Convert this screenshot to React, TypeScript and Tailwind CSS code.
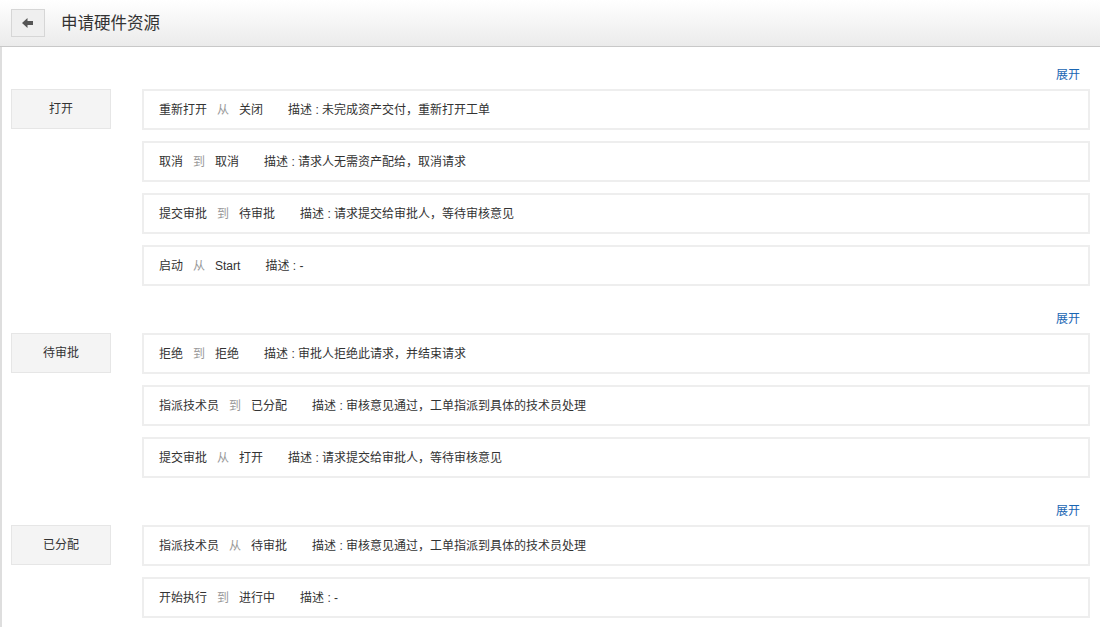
type Row = { action: string; dir: "从" | "到"; state: string; desc: string };
type Group = { label: string; rows: Row[] };

const groups: Group[] = [
  {
    label: "打开",
    rows: [
      { action: "重新打开", dir: "从", state: "关闭", desc: "未完成资产交付，重新打开工单" },
      { action: "取消", dir: "到", state: "取消", desc: "请求人无需资产配给，取消请求" },
      { action: "提交审批", dir: "到", state: "待审批", desc: "请求提交给审批人，等待审核意见" },
      { action: "启动", dir: "从", state: "Start", desc: "-" },
    ],
  },
  {
    label: "待审批",
    rows: [
      { action: "拒绝", dir: "到", state: "拒绝", desc: "审批人拒绝此请求，并结束请求" },
      { action: "指派技术员", dir: "到", state: "已分配", desc: "审核意见通过，工单指派到具体的技术员处理" },
      { action: "提交审批", dir: "从", state: "打开", desc: "请求提交给审批人，等待审核意见" },
    ],
  },
  {
    label: "已分配",
    rows: [
      { action: "指派技术员", dir: "从", state: "待审批", desc: "审核意见通过，工单指派到具体的技术员处理" },
      { action: "开始执行", dir: "到", state: "进行中", desc: "-" },
    ],
  },
];

const BackArrow = () => (
  <svg width="12" height="10" viewBox="0 0 12 10" fill="#555">
    <path d="M0 5 L5.5 0 L5.5 3 L11 3 L11 7 L5.5 7 L5.5 10 Z" />
  </svg>
);

export default function App() {
  return (
    <div
      className="min-h-screen bg-white text-[12px] text-[#333]"
      style={{ fontFamily: '"Liberation Sans", Arial, "Noto Sans CJK SC", sans-serif' }}
    >
      {/* Header */}
      <header className="flex h-[47px] items-center border-b border-[#c8c8c8] bg-gradient-to-b from-white to-[#ebebeb] pl-[11px]">
        <button className="flex h-[28px] w-[34px] items-center justify-center border border-[#d6d6d6] bg-[#efefef]">
          <BackArrow />
        </button>
        <h1 className="ml-[16px] text-[16.5px] text-[#333]">申请硬件资源</h1>
      </header>

      {/* Main content */}
      <main className="border-l-2 border-[#dedede] pb-6 pl-[9px] pr-[10px] pt-[18px]">
        {groups.map((g) => (
          <section key={g.label} className="mb-[23px]">
            <div className="flex h-[20px] items-center justify-end pr-[10px]">
              <a className="cursor-pointer text-[12px] text-[#1a66b3]">展开</a>
            </div>
            <div className="mt-[4px] flex items-start">
              <div className="flex h-[40px] w-[100px] shrink-0 items-center justify-center border border-[#e6e6e6] bg-[#f4f4f4]">
                {g.label}
              </div>
              <div className="ml-[31px] flex flex-1 flex-col gap-[11px]">
                {g.rows.map((r, i) => (
                  <div
                    key={i}
                    className="flex h-[41px] items-center border-2 border-[#eeeeee] bg-white pl-[15px]"
                  >
                    <span>{r.action}</span>
                    <span className="ml-[10px] text-[#999]">{r.dir}</span>
                    <span className="ml-[10px]">{r.state}</span>
                    <span className="ml-[25px]">描述 : {r.desc}</span>
                  </div>
                ))}
              </div>
            </div>
          </section>
        ))}
      </main>
    </div>
  );
}
